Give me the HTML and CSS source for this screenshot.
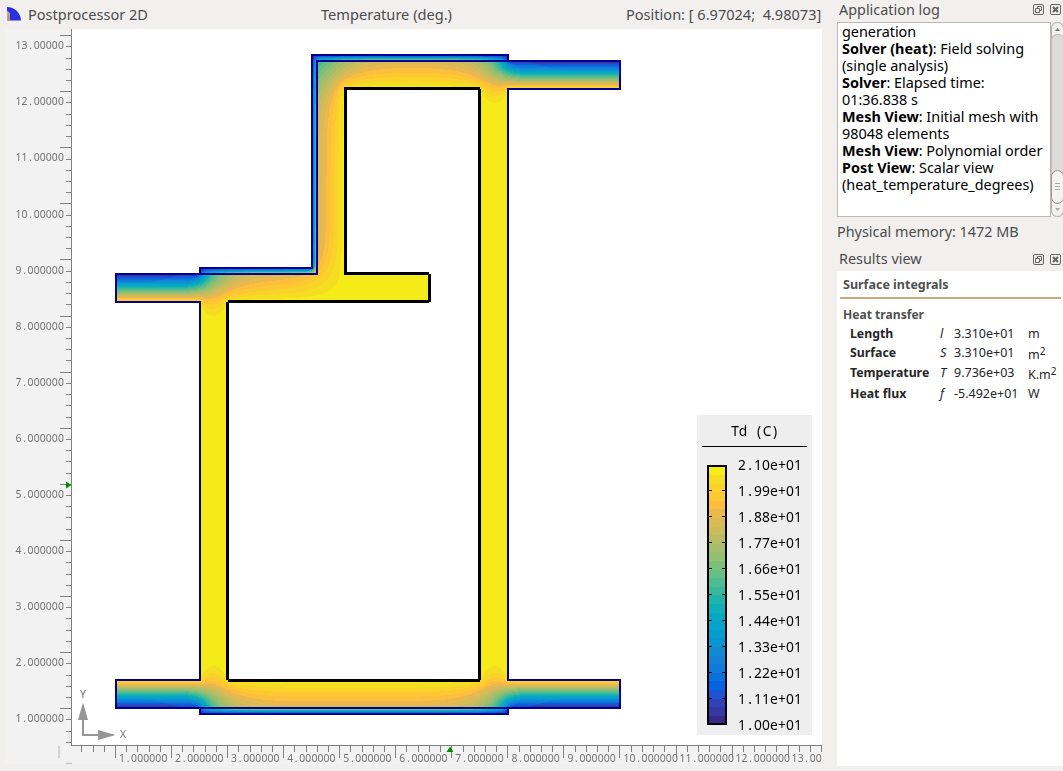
FILE: index.html
```html
<!DOCTYPE html>
<html lang="en">
<head>
<meta charset="utf-8">
<title>Postprocessor 2D</title>
<link rel="stylesheet" href="styles.css">
</head>
<body>
<main class="app">
  <section class="viewer">
    <header class="viewer-head">
      <svg class="logo" width="14" height="14" viewBox="0 0 14 14"><path d="M0 0C7.500 0 13.500 5.500 14 13.500H0Z" fill="#2a2fe0"/><path d="M0 3.500L3 6V13.500H0Z" fill="#a9a3cf"/><path d="M1 7H2.500V13.500H1Z" fill="#e8833a"/></svg>
      <span class="name">Postprocessor 2D</span>
      <span class="quantity">Temperature (deg.)</span>
      <span class="position">Position: [ 6.97024; &nbsp;4.98073]</span>
    </header>
    <div class="scene">
      <canvas id="field" class="field" width="822" height="742"></canvas>
      <svg class="overlay" width="822" height="742" viewBox="0 29 822 742">
        <g class="cold">
          <path d="M200 274H116V302H200V680H116V708H620V680H508V89H620V61H317V274H200"/>
          <path d="M200 274V268H312V55H508V61M200 708V714H508V708"/>
        </g>
        <g class="warm">
          <path d="M344 88.500H480M345.500 88V275M345 273.500H429M429.500 274V302M228 301.500H429M227.500 302V680M228 680.500H480M479.500 89V680"/>
        </g>
        <rect class="ruler-bg" x="5" y="29" width="66" height="735"/>
        <rect class="ruler-bg" x="71" y="746" width="751" height="18"/>
        <path class="corner" d="M59 746V758M66 763.500H72"/>
        <g id="rulers" shape-rendering="crispEdges"><path class="rule" d="M71.500 29V745.500H822"/></g>
        <path class="cursor" d="M66 481.500L71.500 485L66 488.500ZM446.500 752L450 746.500L453.500 752Z"/>
        <g class="axes"><path d="M82 705H84V734H113V736H82Z"/><path d="M83 702.500L88 720H78ZM115.500 735L98 730V740Z"/></g>
        <g id="labels"></g>
        <rect class="legend-bg" x="697" y="415" width="115" height="320"/>
        <path class="legend-rule" d="M702 446.500H807"/>
        <g id="scale"></g>
      </svg>
    </div>
  </section>
  <aside class="side">
    <header class="dock-head"><span>Application log</span><span class="tools">
      <svg width="11" height="11" viewBox="0 0 11 11"><rect x=".5" y=".5" width="10" height="10" rx="1.500"/><path d="M4.500 4.500V2.500H8.500V6.500H6.500M2.500 4.500H6.500V8.500H2.500Z"/></svg>
      <svg width="11" height="11" viewBox="0 0 11 11"><rect x=".5" y=".5" width="10" height="10" rx="1.500"/><path class="thick" d="M3 3L8 8M8 3L3 8"/></svg></span></header>
    <div class="log">
      <div class="log-text">
        <div>generation</div>
        <div><b>Solver (heat)</b>: Field solving</div>
        <div>(single analysis)</div>
        <div><b>Solver</b>: Elapsed time:</div>
        <div>01:36.838 s</div>
        <div><b>Mesh View</b>: Initial mesh with</div>
        <div>98048 elements</div>
        <div><b>Mesh View</b>: Polynomial order</div>
        <div><b>Post View</b>: Scalar view</div>
        <div>(heat_temperature_degrees)</div>
      </div>
      <svg class="scroll" width="12" height="195" viewBox="0 0 12 195">
        <rect x=".5" y=".5" width="12" height="194" rx="6" fill="#dedcda" stroke="#c0bdb9"/>
        <path d="M.5 17V7Q.5 .5 6.500 .5T12.500 7V17Q11 12.500 6.500 12.500T.5 17ZM.5 176V188Q.5 194.500 6.500 194.500T12.500 188V176Z" fill="#f1f0ef" stroke="#b5b2ae"/>
        <rect x=".5" y="148.500" width="12" height="33" rx="6" fill="#f4f3f2" stroke="#979491"/>
        <path d="M4 9L6.500 6L9 9Z" fill="#777"/><path d="M4 186L6.500 189L9 186Z" fill="#aaa"/>
        <path d="M4 161.500H9M4 164.500H9M4 167.500H9" stroke="#aaa"/>
      </svg>
    </div>
    <div class="memory">Physical memory: 1472 MB</div>
    <header class="dock-head results-head"><span>Results view</span><span class="tools">
      <svg width="11" height="11" viewBox="0 0 11 11"><rect x=".5" y=".5" width="10" height="10" rx="1.500"/><path d="M4.500 4.500V2.500H8.500V6.500H6.500M2.500 4.500H6.500V8.500H2.500Z"/></svg>
      <svg width="11" height="11" viewBox="0 0 11 11"><rect x=".5" y=".5" width="10" height="10" rx="1.500"/><path class="thick" d="M3 3L8 8M8 3L3 8"/></svg></span></header>
    <div class="results">
      <h2>Surface integrals</h2>
      <h3>Heat transfer</h3>
      <div class="row"><b>Length</b><i>l</i><span>3.310e+01</span><span class="unit">m</span></div>
      <div class="row"><b>Surface</b><i>S</i><span>3.310e+01</span><span class="unit low">m<sup>2</sup></span></div>
      <div class="row tall"><b>Temperature</b><i>T</i><span>9.736e+03</span><span class="unit low">K.m<sup>2</sup></span></div>
      <div class="row"><b>Heat flux</b><i>f</i><span>-5.492e+01</span><span class="unit">W</span></div>
    </div>
  </aside>
</main>
<script src="plot.js"></script>
</body>
</html>
```
FILE: styles.css
```css
* { box-sizing: border-box; }
body { margin: 0; background: #f1f0ef; color: #4c4c4c; font: 14.4px/17px "Noto Sans", "Open Sans", sans-serif; }
.app { display: flex; width: 1063px; height: 771px; overflow: hidden; }
.viewer { width: 837px; }
.viewer-head { display: grid; grid-template-columns: 21px 293px 305px auto; width: 822px; height: 29px; padding: 6px 0 0 7px; white-space: nowrap; }
.logo { margin-top: 1px; }
.name, .position { font-size: 14.55px; }
.quantity { font-size: 14.6px; }
.scene { display: grid; width: 822px; height: 742px; background: linear-gradient(#fff, #fff) 72px 0 / 750px 717px no-repeat; }
.field, .overlay { grid-area: 1 / 1; display: block; }
.cold path { fill: none; stroke: #000096; stroke-width: 2; shape-rendering: crispEdges; }
.warm path { fill: none; stroke: #000; stroke-width: 3; shape-rendering: crispEdges; }
.ruler-bg { fill: #f2f2f2; }
.rule { fill: none; stroke: #808080; }
.corner { fill: none; stroke: #c8c8c8; stroke-width: 1.5; }
.cursor { fill: #008a00; }
.axes { fill: #969696; }
.label { font: 10.4px "Noto Sans", sans-serif; fill: #747474; text-anchor: middle; }
.legend-bg { fill: #eeeeee; }
.legend-rule { stroke: #000; fill: none; }
.legend-text { font: 13.8px "Noto Sans", sans-serif; fill: #000; text-anchor: middle; }
.bar { fill: none; stroke: #000; stroke-width: 2; }
.side { width: 226px; display: flex; flex-direction: column; }
.dock-head { height: 22px; display: flex; justify-content: space-between; padding: 1px 2px 0; }
.tools { display: flex; gap: 6px; padding-top: 3px; }
.tools svg { fill: none; stroke: #686663; }
.tools .thick { stroke-width: 2.2; }
.log { display: flex; height: 195px; }
.log-text { width: 214px; background: #fff; border: 1px solid #bcb9b5; padding: 0 4px; color: #000; white-space: nowrap; }
.memory { height: 32px; padding-top: 6px; }
.results-head { height: 22px; }
.results-head .tools { padding-top: 4px; }
.results-head .tools svg { flex: none; }
.results { height: 495px; background: #fff; padding: 5px 2px 0 6px; font-size: 12.5px; color: #262626; }
h2, h3 { margin: 0; font-size: 12.5px; line-height: 17px; color: #505050; }
h3 { font-size: 12.1px; }
h2 { height: 23px; border-bottom: 2px solid #cdaa7d; margin-left: -3px; padding-left: 3px; }
h3 { padding-top: 7px; height: 25px; }
.row { display: grid; grid-template-columns: 90px 14px 74px auto; padding-left: 7px; height: 19px; line-height: 19px; white-space: nowrap; }
.row b { font-size: 12.3px; }
.row.tall { height: 22px; line-height: 22px; }
.unit.low { padding-top: 2px; }
sup { font-size: 10px; line-height: 0; vertical-align: 4px; }
```
FILE: plot.js
```js
const PARULA = ('352a87 363093 3637a0 353dad 3243ba 2c4ac7 2053d4 0f5cdd 0363e1 0268e1 046de0 0871de 0d75dc 1079da 127dd8 1481d6 ' +
  '1485d4 1389d3 108ed2 0c93d2 0998d1 079ccf 06a0cd 06a4ca 06a7c6 07a9c2 0aacbe 0faeb9 15b1b4 1db3af 25b5a9 2eb7a4 ' +
  '38b99e 42bb98 4dbc92 59bd8c 65be86 71bf80 7cbf7b 87bf77 92bf73 9cbf6f a5be6b aebe67 b7bd64 c0bc60 c8bc5d d1bb59 ' +
  'd9ba56 e1b952 e9b94e f1b94a f8bb44 fdbe3d ffc337 fec832 fcce2e fad32a f7d826 f5de21 f5e41d f5eb18').split(' ');
const STEPS = 30;
const colors = Array.from({ length: STEPS }, (_, i) => PARULA[Math.round(i * 61 / (STEPS - 1))]);

/* Steady heat conduction on a 1px grid. */
function drawField() {
  const W = 822, H = 742, TOP = 29, N = W * H;
  const k = new Float32Array(N);
  const fill = (x0, y0, x1, y1, v) => {
    for (let y = y0; y < y1; y++) k.fill(v, (y - TOP) * W + x0, (y - TOP) * W + x1);
  };
  const INS = 0.056;
  fill(312, 55, 508, 61, INS); fill(312, 55, 317, 274, INS);
  fill(200, 268, 317, 274, INS); fill(200, 708, 508, 714, INS);
  fill(116, 274, 429, 302, 1); fill(200, 302, 228, 680, 1);
  fill(116, 680, 620, 708, 1); fill(480, 61, 508, 680, 1);
  fill(317, 61, 620, 89, 1); fill(317, 61, 345, 274, 1);
  const cells = [];
  for (let i = 0; i < N; i++) if (k[i]) cells.push(i);
  const M = cells.length, c = new Float32Array(M * 4), b = new Float32Array(M), d = new Float32Array(M);
  const off = [-W, -1, 1, W], T = new Float32Array(N).fill(21);
  cells.forEach((p, m) => {
    for (let j = 0; j < 4; j++) {
      const q = p + off[j], x = q % W, y = Math.floor(q / W) + TOP;
      if (k[q]) {
        const g = 2 * k[p] * k[q] / (k[p] + k[q]);
        c[m * 4 + j] = g; d[m] += g;
      } else if (x >= 116 && x < 620) {
        const cold = y < 61 || y >= 708 || (x < 317 && y < 274);
        const g = 1 / (0.5 / k[p] + (cold ? 0.4 : 1.3));
        b[m] += g * (cold ? 10 : 21); d[m] += g;
      }
    }
  });
  for (let n = 0; n < 500; n++) {
    for (let m = 0; m < M; m++) {
      const p = cells[m], a = m * 4;
      const v = (b[m] + c[a] * T[p - W] + c[a + 1] * T[p - 1] + c[a + 2] * T[p + 1] + c[a + 3] * T[p + W]) / d[m];
      T[p] += 1.9 * (v - T[p]);
    }
  }
  const ctx = document.getElementById('field').getContext('2d');
  const img = ctx.createImageData(W, H);
  for (const p of cells) {
    const s = Math.max(0, Math.min(STEPS - 1, Math.floor((T[p] - 10) / 11 * STEPS)));
    const v = parseInt(colors[s], 16);
    img.data.set([v >> 16, v >> 8 & 255, v & 255, 255], p * 4);
  }
  ctx.putImageData(img, 0, 0);
}

/* Text on a fixed pitch, one x position for each character. */
function pitched(s, x, y, pitch, cls) {
  const xs = [...s].map((_, i) => (x + pitch * (i + 0.5)).toFixed(1)).join(' ');
  return `<text class="${cls}" y="${y}" x="${xs}">${s}</text>`;
}

function drawRulers() {
  let d = '', t = '';
  for (let n = 0; n <= 63; n++) {
    const y = Math.round(35.15 + n * 11.217);
    if (y < 745) d += `M${n % 5 ? 66 : 60} ${y + .5}H71`;
  }
  for (let n = -3; n <= 63; n++) d += `M${Math.round(115 + n * 11.21) + .5} 745V${n % 5 ? 752 : 758}`;
  for (let v = 1; v <= 13; v++) {
    const s = v.toFixed(6).slice(0, 8);
    t += pitched(s, 15.500, Math.round(49.2 + (13 - v) * 56.1), 6.050, 'label');
    t += pitched(v.toFixed(6), 119 + (v - 1) * 56.05, 762, 6.050, 'label');
  }
  t += pitched('Y', 80, 698, 6, 'label') + pitched('X', 120, 738, 6, 'label');
  document.getElementById('rulers').innerHTML += `<path class="rule" d="${d}"/>`;
  document.getElementById('labels').innerHTML = t;
}

function drawScale() {
  let s = pitched('Td (C)', 731, 436, 8, 'legend-text');
  const h = 258 / STEPS;
  colors.forEach((c, i) => {
    s += `<rect shape-rendering="crispEdges" x="708" width="18" y="${724 - (i + 1) * h}" height="${h + .3}" fill="#${c}"/>`;
  });
  s += '<rect class="bar" x="708" y="466" width="18" height="258"/>';
  for (let i = 0; i <= 10; i++) {
    const y = 465 + i * 26;
    if (i && i < 10) s += `<path stroke="#000" d="M709 ${y - .5}H712M722 ${y - .5}H725"/>`;
    s += pitched((2.1 - i * 0.11).toFixed(2) + 'e+01', 738, y + 5, 8, 'legend-text');
  }
  document.getElementById('scale').innerHTML = s;
}

drawField();
drawRulers();
drawScale();
```
